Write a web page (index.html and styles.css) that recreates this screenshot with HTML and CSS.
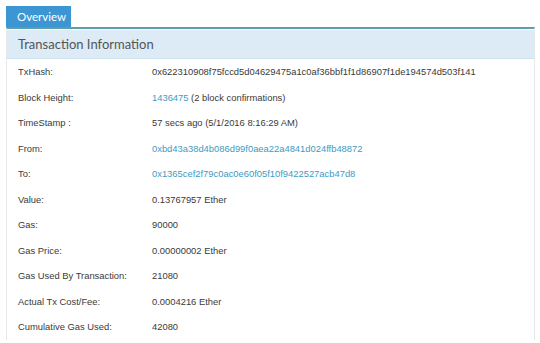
FILE: index.html
```html
<!DOCTYPE html>
<html lang="en">
<head>
    <meta charset="UTF-8">
    <title>Transaction</title>
    <link rel="stylesheet" href="styles.css">
</head>
<body>
<div class="tabs">
    <span class="tab active">Overview</span>
</div>
<div class="panel">
    <div class="panel-heading">Transaction Information</div>
    <table class="details">
        <tr><td class="label">TxHash:</td><td>0x622310908f75fccd5d04629475a1c0af36bbf1f1d86907f1de194574d503f141</td></tr>
        <tr><td class="label">Block Height:</td><td><a href="#">1436475</a> (2 block confirmations)</td></tr>
        <tr><td class="label">TimeStamp :</td><td>57 secs ago (5/1/2016 8:16:29 AM)</td></tr>
        <tr><td class="label">From:</td><td><a href="#">0xbd43a38d4b086d99f0aea22a4841d024ffb48872</a></td></tr>
        <tr><td class="label">To:</td><td><a href="#">0x1365cef2f79c0ac0e60f05f10f9422527acb47d8</a></td></tr>
        <tr><td class="label">Value:</td><td>0.13767957 Ether</td></tr>
        <tr><td class="label">Gas:</td><td>90000</td></tr>
        <tr><td class="label">Gas Price:</td><td>0.00000002 Ether</td></tr>
        <tr><td class="label">Gas Used By Transaction:</td><td>21080</td></tr>
        <tr><td class="label">Actual Tx Cost/Fee:</td><td>0.0004216 Ether</td></tr>
        <tr><td class="label">Cumulative Gas Used:</td><td>42080</td></tr>
    </table>
</div>
</body>
</html>
```

FILE: styles.css
```css
body {
  margin: 0;
  padding: 6px 5px 0 6px;
  background-color: #ffffff;
  font-family: "Liberation Sans", Arial, sans-serif;
  color: #3a3a3a;
}
.tabs {
  display: flex;
  height: 21px;
}
.tab {
  font-family: Lato, "Open Sans", sans-serif;
  font-size: 11.5px;
  line-height: 21px;
  padding: 0 10px 0 11px;
  width: 44px;
}
.tab.active {
  background-color: #3c96d4;
  color: #ffffff;
}
.panel {
  border-top: 2px solid #5e9ea6;
  border-left: 1px solid #e6e9ec;
  border-right: 1px solid #e6e9ec;
}
.panel-heading {
  background-color: #dcebf5;
  border-top: 1px solid #ffffff;
  border-bottom: 1px solid #cfe3ef;
  font-family: Lato, "Open Sans", sans-serif;
  font-size: 13px;
  color: #555555;
  padding: 0 11px;
  height: 28px;
  line-height: 28px;
}
.details {
  border-collapse: collapse;
  font-size: 9.4px;
}
.details td {
  height: 25.5px;
  padding: 0;
  white-space: nowrap;
}
.details td.label {
  width: 134px;
  padding-left: 11px;
}
.details a {
  color: #3d9bc4;
  text-decoration: none;
}
```
